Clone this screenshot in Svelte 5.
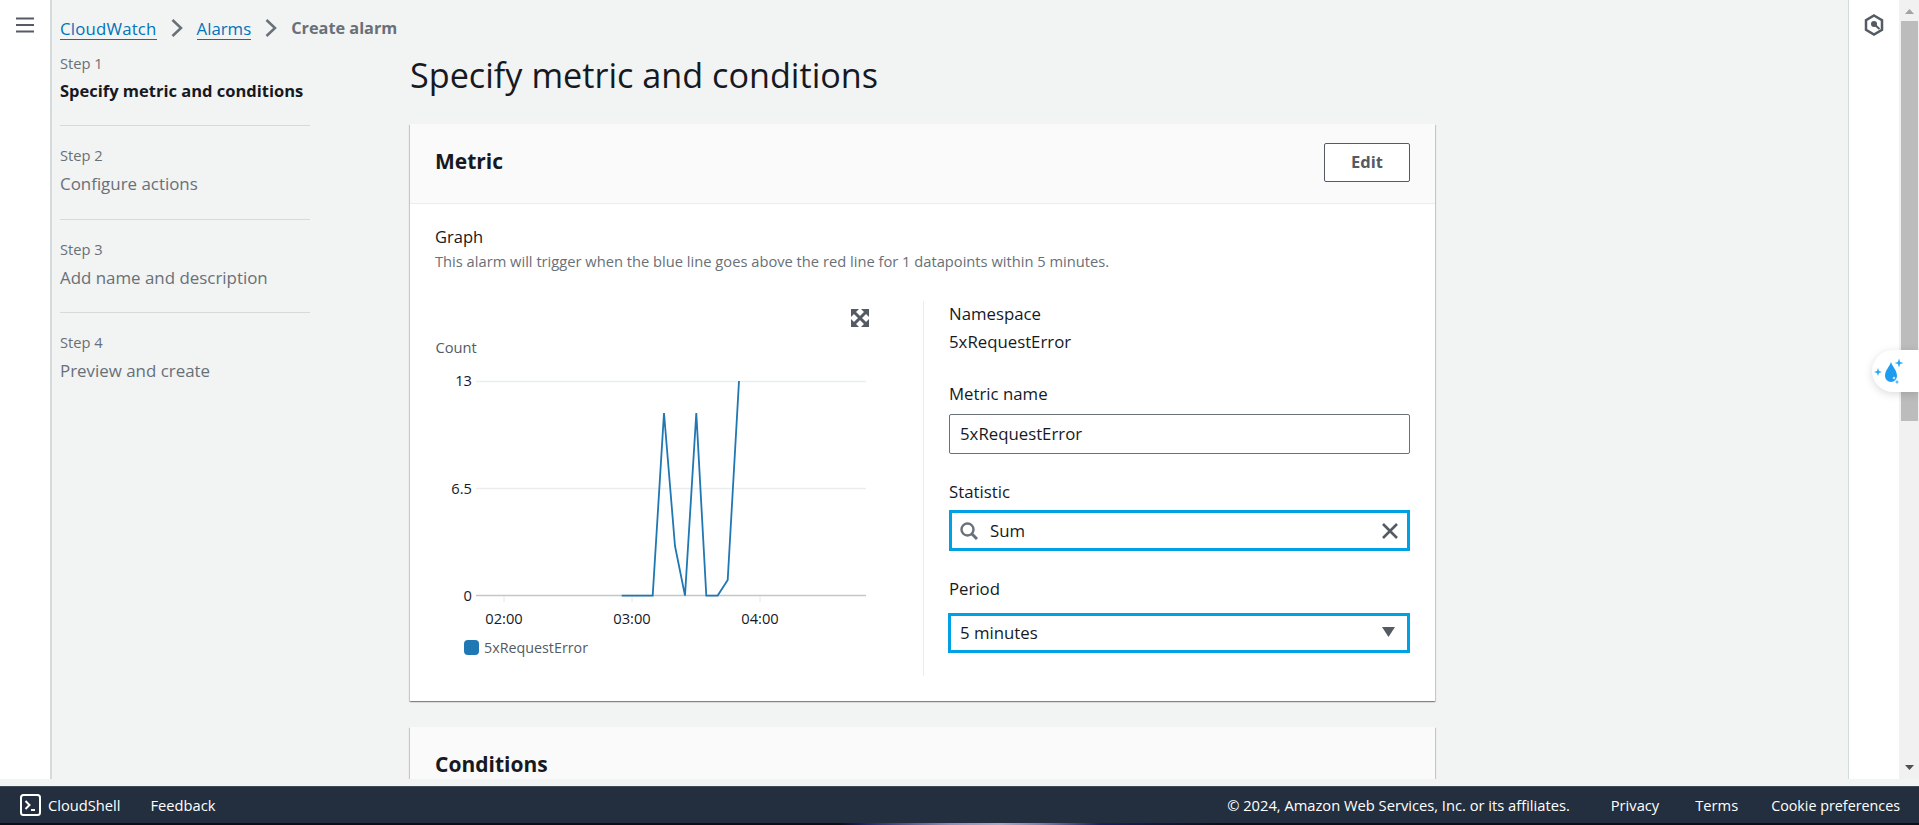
<script>
  const steps = [
    { n: 'Step 1', t: 'Specify metric and conditions', active: true },
    { n: 'Step 2', t: 'Configure actions' },
    { n: 'Step 3', t: 'Add name and description' },
    { n: 'Step 4', t: 'Preview and create' }
  ];
  const pts = '621.7,595.6 652.7,595.6 664,413 675,546 685,595.6 696.3,413 706.3,595.6 717.7,595.6 727.7,580 739,381';
</script>

<div class="page">
  <div class="top">
    <aside class="left">
      <svg class="burger" width="18" height="16" viewBox="0 0 18 16"><path d="M0 1.500h18M0 8h18M0 14.500h18" stroke="#545b64" stroke-width="2"/></svg>
    </aside>
    <main class="main">
      <nav class="crumbs">
        <a class="cw">CloudWatch</a>
        <svg class="chev" width="12" height="18" viewBox="0 0 12 18"><path d="M1.500 1l8.500 8-8.500 8" fill="none" stroke="#687078" stroke-width="2.500"/></svg>
        <a>Alarms</a>
        <svg class="chev" width="12" height="18" viewBox="0 0 12 18"><path d="M1.500 1l8.500 8-8.500 8" fill="none" stroke="#687078" stroke-width="2.500"/></svg>
        <b>Create alarm</b>
      </nav>
      <div class="body">
        <ol class="steps">
          {#each steps as s}
            <li class:active={s.active}>
              <small>{s.n}</small>
              <span>{s.t}</span>
            </li>
          {/each}
        </ol>
        <div class="content">
          <h1>Specify metric and conditions</h1>
          <section class="card">
            <header class="chead">
              <h2 class="mt">Metric</h2>
              <button class="edit">Edit</button>
            </header>
            <div class="cbody">
              <div class="glabel">Graph</div>
              <div class="gdesc">This alarm will trigger when the blue line goes above the red line for 1 datapoints within 5 minutes.</div>
              <div class="cols">
                <div class="chart">
                  <svg width="488" height="375" viewBox="435 301 488 375">
                    <g transform="translate(851 309)">
                      <path d="M0 0h8L0 8zM18 0v8l-8-8zM18 18h-8l8-8zM0 18v-8l8 8z" fill="#545b64"/>
                      <path d="M2 2l14 14M16 2L2 16" stroke="#545b64" stroke-width="3"/>
                    </g>
                    <text x="435.500" y="353" class="t count">Count</text>
                    <path d="M476 381.500H866M476 488.500H866" stroke="#eaeded" stroke-width="1.500"/>
                    <path d="M476 595.600H866" stroke="#c4c6c6" stroke-width="1.500"/>
                    <path d="M504 596v6M632 596v6M760 596v6" stroke="#e4e6e6" stroke-width="1"/>
                    <text x="472" y="386" text-anchor="end" class="t">13</text>
                    <text x="472" y="493.500" text-anchor="end" class="t">6.5</text>
                    <text x="472" y="601" text-anchor="end" class="t">0</text>
                    <text x="504" y="623.500" text-anchor="middle" class="t">02:00</text>
                    <text x="632" y="623.500" text-anchor="middle" class="t">03:00</text>
                    <text x="760" y="623.500" text-anchor="middle" class="t">04:00</text>
                    <polyline points={pts} fill="none" stroke="#1f77b4" stroke-width="1.800"/>
                    <rect x="464" y="640" width="15" height="15" rx="4" fill="#1f77b4"/>
                    <text x="484" y="653" class="t legend">5xRequestError</text>
                  </svg>
                </div>
                <div class="form">
                  <div class="lab first">Namespace</div>
                  <div class="lab val">5xRequestError</div>
                  <div class="lab l2">Metric name</div>
                  <div class="inp">5xRequestError</div>
                  <div class="lab l3">Statistic</div>
                  <div class="inp focus">
                    <svg width="18" height="18" viewBox="0 0 18 18"><circle cx="7.500" cy="7.500" r="6" fill="none" stroke="#687078" stroke-width="2.400"/><path d="M12 12l5 5" stroke="#687078" stroke-width="3"/></svg>
                    <span class="sum">Sum</span>
                    <svg class="x" width="16" height="16" viewBox="0 0 16 16"><path d="M1 1l14 14M15 1L1 15" stroke="#545b64" stroke-width="2.600"/></svg>
                  </div>
                  <div class="lab l3">Period</div>
                  <div class="inp focus sel">
                    <span>5 minutes</span>
                    <svg class="x" width="13" height="10" viewBox="0 0 13 10"><path d="M0 0h13L6.500 10z" fill="#545b64"/></svg>
                  </div>
                </div>
              </div>
            </div>
          </section>
          <section class="card c2">
            <header class="chead2"><h2>Conditions</h2></header>
          </section>
        </div>
      </div>
    </main>
    <aside class="right">
      <svg width="20" height="22" viewBox="0 0 20 22"><path d="M10 1.500l8 4.750v9.500L10 20.500l-8-4.750v-9.500z" fill="none" stroke="#545b64" stroke-width="2.500"/><circle cx="10" cy="10" r="3" fill="#545b64"/><path d="M10.500 10.500l5 4.500" stroke="#545b64" stroke-width="2"/></svg>
    </aside>
    <div class="scroll">
      <svg class="up" width="9" height="5" viewBox="0 0 9 5"><path d="M0 5h9L4.500 0z" fill="#a3a3a3"/></svg>
      <div class="thumb"></div>
      <svg class="dn" width="9" height="5" viewBox="0 0 9 5"><path d="M0 0h9L4.500 5z" fill="#505050"/></svg>
    </div>
    <div class="drop">
      <svg width="40" height="36" viewBox="0 0 40 36">
        <path d="M18 8c-1.500 5-6 8-6 14a6 6 0 0 0 12 0c0-6-4.500-9-6-14z" fill="#1f9cf0"/>
        <circle cx="21" cy="24" r="1.300" fill="#bfe4ff"/>
        <path d="M5 14l1 3 3 1-3 1-1 3-1-3-3-1 3-1zM26 4.500l1.100 3.400 3.400 1.100-3.400 1.100-1.100 3.400-1.100-3.400-3.400-1.100 3.400-1.100zM24 25.500l.6 1.900 1.900.6-1.900.6-.6 1.900-.6-1.900-1.900-.6 1.900-.6z" fill="#2aa8f5"/>
      </svg>
    </div>
  </div>
  <div class="strip"></div>
  <footer class="foot">
    <svg class="sh" width="21" height="22" viewBox="0 0 21 22"><rect x="1" y="1" width="19" height="20" rx="2.500" fill="none" stroke="#fff" stroke-width="2"/><path d="M5.500 7l4 4-4 4" fill="none" stroke="#fff" stroke-width="2"/><path d="M11 16h4" stroke="#fff" stroke-width="2"/></svg>
    <span class="f1">CloudShell</span>
    <span class="f2">Feedback</span>
    <span class="copy">© 2024, Amazon Web Services, Inc. or its affiliates.</span>
    <span class="f3 p">Privacy</span>
    <span class="f3 tm">Terms</span>
    <span class="f3 ck">Cookie preferences</span>
  </footer>
  <div class="edge"></div>
</div>

<style>
  :global(body) { margin: 0; overflow: hidden; }
  .page { width: 1919px; height: 825px; display: flex; flex-direction: column; overflow: hidden; font-family: "Open Sans", sans-serif; font-size: 16.800px; color: #16191f; background: #f2f3f3; position: relative; }
  .top { height: 779px; flex: none; display: flex; overflow: hidden; position: relative; }
  .left { width: 50px; flex: none; background: #fff; border-right: 2px solid #d5dbdb; }
  .burger { display: block; margin: 17px 0 0 16px; }
  .main { flex: none; width: 1796px; background: #f2f3f3; }
  .crumbs { display: flex; align-items: center; height: 22px; padding: 17px 0 0 8px; font-size: 16.800px; }
  .crumbs a { color: #0073bb; border-bottom: 1px solid #0073bb; line-height: 20px; margin-top: 2px; }
  .crumbs .cw { letter-spacing: .2px; }
  .crumbs b { color: #687078; font-weight: 700; font-size: 16.300px; }
  .chev { margin: 0 14px 0 14px; flex: none; }
  .body { display: flex; }
  .steps { list-style: none; margin: 0 0 0 8px; padding: 0; width: 250px; flex: none; }
  .steps li { height: 93.500px; box-sizing: border-box; border-bottom: 1px solid #d5dbdb; padding-top: 5px; color: #687078; display: flex; flex-direction: column; }
  .steps li:first-child { height: 87px; padding-top: 0; }
  .steps li:last-child { border-bottom: 0; }
  .steps small { font-size: 14.700px; line-height: 20px; margin-top: 14px; }
  .steps span { line-height: 22px; margin-top: 8px; font-size: 16.900px; }
  .steps li:first-child span { margin-top: 7px; }
  .steps .active span { color: #16191f; font-weight: 700; font-size: 16.500px; }
  .content { margin-left: 100px; width: 1025px; }
  h1 { margin: 0; font-size: 34.200px; font-weight: 400; line-height: 44px; padding-top: 14px; height: 85px; box-sizing: border-box; }
  h2 { margin: 0; font-size: 21px; font-weight: 700; line-height: 28px; }
  .mt { margin-top: -4px; }
  .card { background: #fff; box-shadow: 0 1px 1px 0 rgba(0,28,36,.3), 1px 1px 1px 0 rgba(0,28,36,.15), -1px 1px 1px 0 rgba(0,28,36,.15); }
  .chead { height: 80px; box-sizing: border-box; background: #fafafa; border-bottom: 1px solid #eaeded; display: flex; justify-content: space-between; align-items: center; padding: 0 25px 2px 25px; }
  .edit { width: 86px; height: 39px; background: #fff; border: 1px solid #545b64; border-radius: 2px; font: 700 16.500px "Open Sans", sans-serif; color: #545b64; padding: 0 0 2px; }
  .cbody { padding: 22px 25px 0 25px; height: 497px; box-sizing: border-box; }
  .glabel { line-height: 22px; font-size: 16.500px; }
  .gdesc { font-size: 14.700px; line-height: 20px; color: #687078; margin-top: 3px; }
  .cols { display: flex; margin-top: 30px; }
  .chart { width: 488px; height: 375px; flex: none; }
  .chart svg { display: block; }
  .t { font: 14.700px "Open Sans", sans-serif; fill: #16191f; }
  .count { fill: #545b64; }
  .legend { fill: #545b64; font-size: 14.300px; }
  .form { flex: 1; border-left: 1px solid #eaeded; height: 375px; padding-left: 25px; box-sizing: border-box; }
  .lab { line-height: 22px; }
  .first { margin-top: 2px; }
  .val { margin-top: 6px; }
  .l2 { margin-top: 30px; }
  .inp { height: 40px; box-sizing: border-box; border: 1px solid #687078; border-radius: 2px; display: flex; align-items: center; padding: 0 10px 2px; margin-top: 9px; background: #fff; }
  .l3 { margin-top: 27px; }
  .focus { height: 41px; border: 3px solid #00a1e4; border-radius: 0; padding: 0 9px 0 8px; margin-top: 7px; }
  .sel { margin-top: 13px; margin-left: -1px; height: 40px; padding: 0 12px 2px 9px; }
  .sum { margin-left: 12px; margin-bottom: 1px; }
  .x { margin-left: auto; }
  .c2 { margin-top: 26px; height: 120px; }
  .chead2 { height: 120px; background: #fafafa; padding: 23px 25px 0; box-sizing: border-box; }
  .right { width: 51px; flex: none; background: #fff; border-left: 1px solid #d5dbdb; text-align: center; box-sizing: border-box; padding-top: 14px; }
  .scroll { width: 20px; flex: none; background: #f1f1f1; position: relative; }
  .thumb { position: absolute; left: 2px; top: 21px; width: 17px; height: 400px; background: #bcbcbc; }
  .up { position: absolute; left: 6px; top: 9px; }
  .dn { position: absolute; left: 6px; top: 765px; }
  .drop { position: absolute; right: 0; top: 350px; width: 47px; height: 42px; background: #fff; border-radius: 21px 0 0 21px; box-shadow: 0 2px 8px rgba(0,0,0,.15); padding: 4px 0 0 1px; box-sizing: border-box; }
  .strip { height: 7px; background: #f2f3f3; flex: none; }
  .foot { height: 37px; flex: none; background: #232f3e; color: #fff; font-size: 14.700px; display: flex; align-items: center; padding-left: 20px; border-top: 1px solid #414b58; box-sizing: border-box; }
  .f1 { margin-left: 7px; }
  .f2 { margin-left: 30px; }
  .copy { margin-left: auto; }
  .f3 { margin-left: 36px; }
  .p { margin-left: 41px; }
  .ck { margin-left: 33px; margin-right: 19px; font-size: 14.300px; }
  .edge { height: 2px; flex: none; background: linear-gradient(90deg, #0b1018 0, #0b1018 840px, #1b1f5c 860px, #8d8dbb 950px, #a8a8c8 1000px, #8080b0 1040px, #1b1f5c 1100px, #0b1018 1220px); }
</style>
